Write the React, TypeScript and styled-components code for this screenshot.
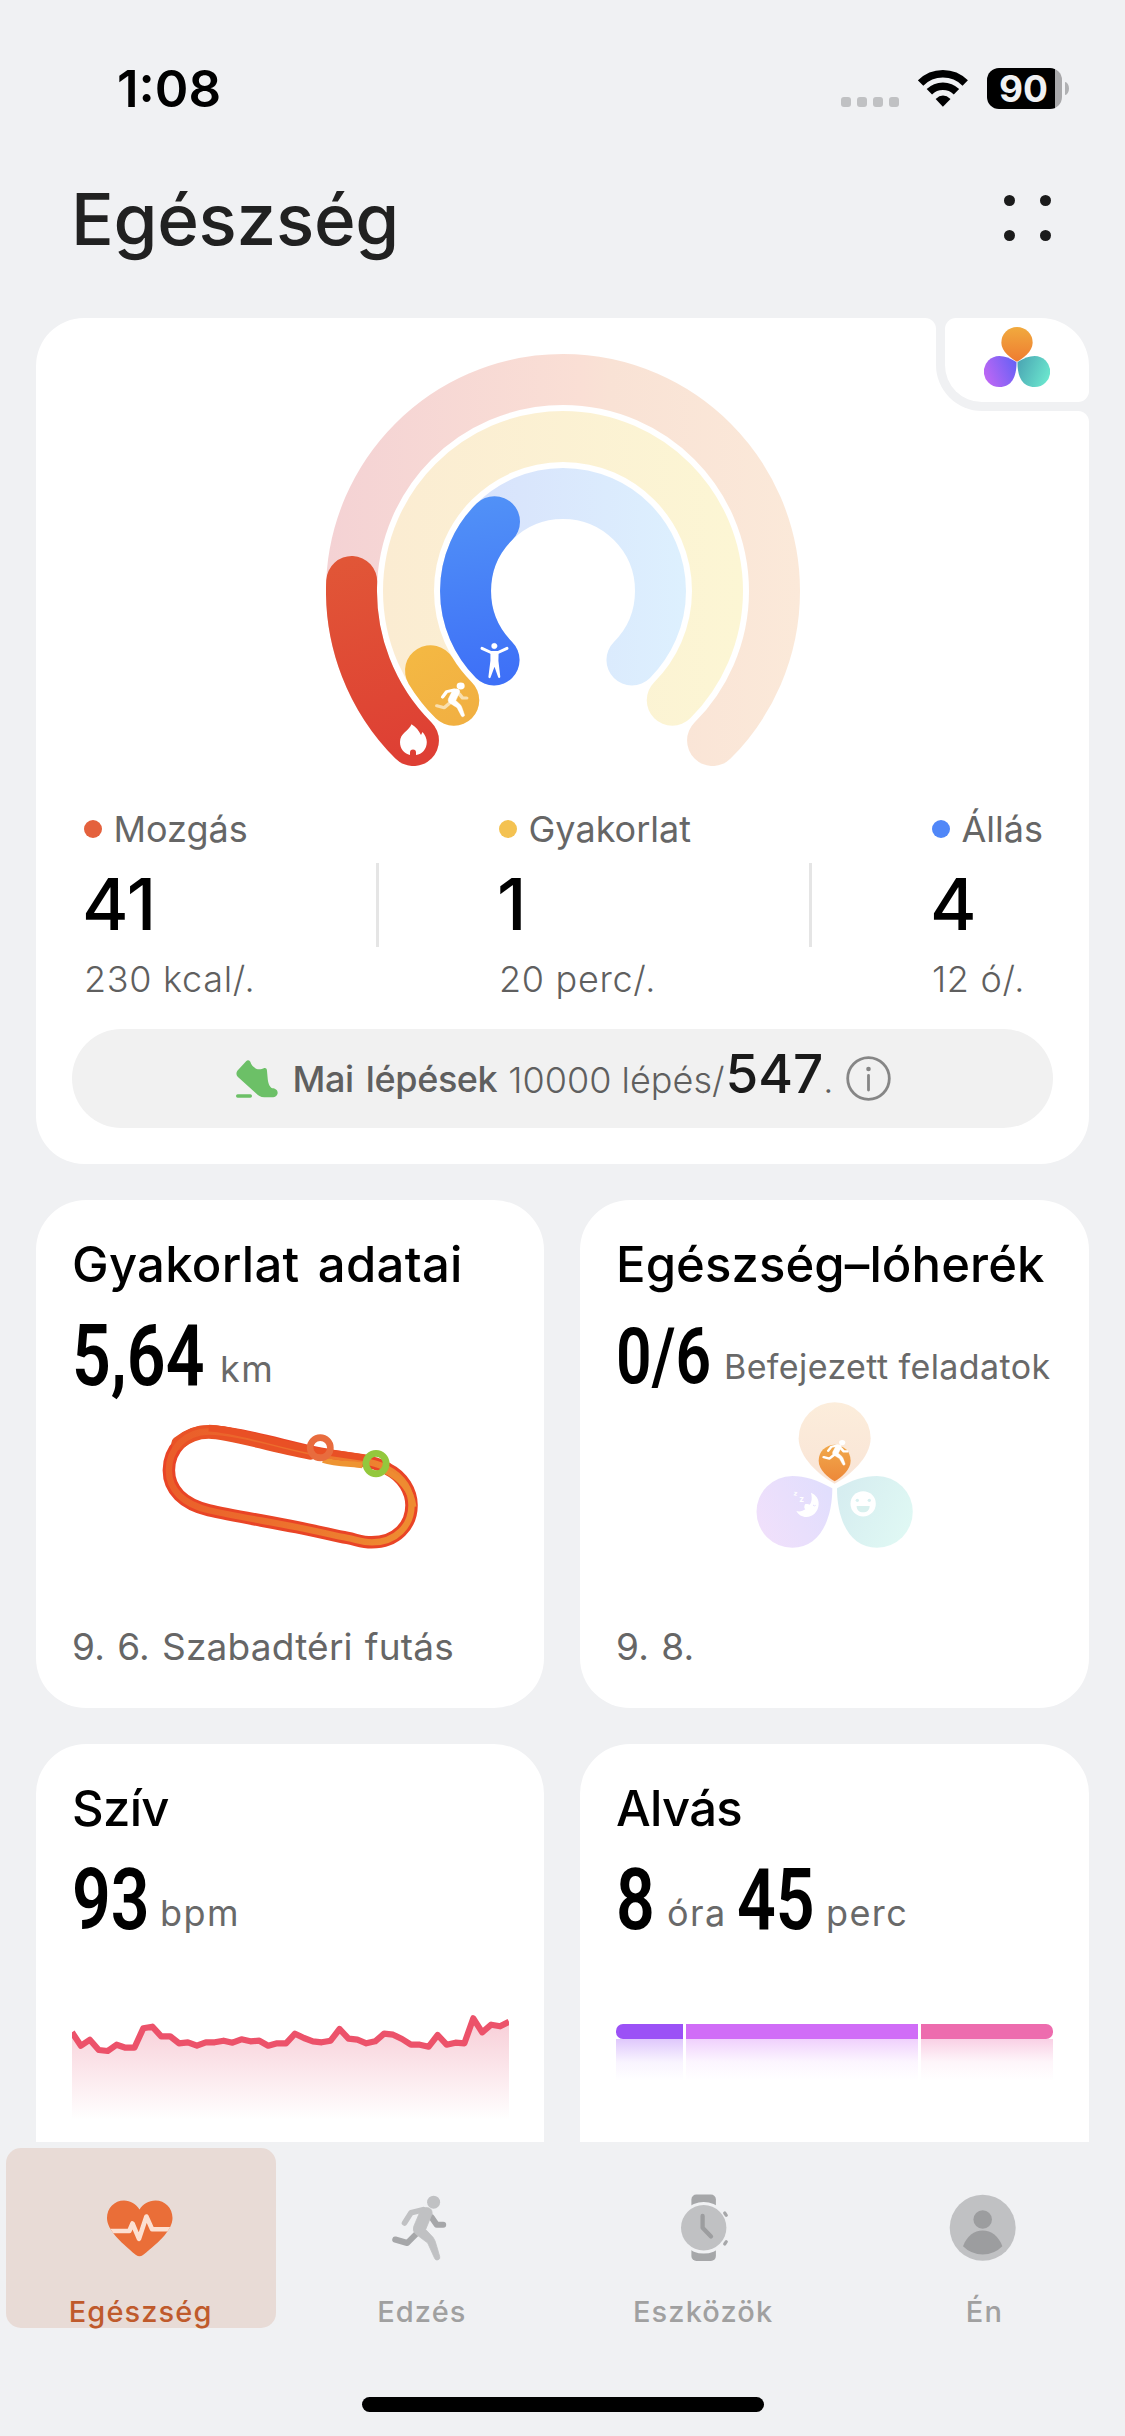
import React from "react";
import styled, { createGlobalStyle } from "styled-components";

const PAGE = "#f0f1f3";

const GlobalStyle = createGlobalStyle`
  *, *::before, *::after { box-sizing: border-box; }
  body { margin: 0; background: ${PAGE}; }
`;

const Screen = styled.div`
  width: 1125px;
  height: 2436px;
  display: flex;
  flex-direction: column;
  overflow: hidden;
  background: ${PAGE};
  color: #000;
  font-family: Inter, "Liberation Sans", sans-serif;
  white-space: nowrap;

  svg { display: block; flex: none; }
`;

/* ---------- status bar ---------- */

const StatusBar = styled.div`
  flex: none;
  height: 177px;
  padding: 0 56px 0 117px;
  display: flex;
  align-items: center;
  justify-content: space-between;
`;

const Clock = styled.div`
  font-size: 51px;
  line-height: 60px;
  font-weight: 600;
`;

const StatusIcons = styled.div`
  display: flex;
  align-items: center;
  gap: 19px;
`;

const SignalDots = styled.div`
  display: flex;
  gap: 6px;
  margin-top: 27px;
`;

const SignalDot = styled.i`
  width: 10px;
  height: 10px;
  border-radius: 3px;
  background: #c0c1c3;
`;

const BatteryWrap = styled.div`
  display: flex;
  align-items: center;
  gap: 3px;
`;

const Battery = styled.div`
  width: 75px;
  height: 41px;
  padding-right: 2px;
  border-radius: 12px;
  background: linear-gradient(90deg, #000 68px, #a8a8aa 68px);
  color: ${PAGE};
  font-size: 37px;
  line-height: 41px;
  font-weight: 700;
  text-align: center;
`;

const BatteryNub = styled.i`
  width: 4px;
  height: 13px;
  border-radius: 0 4px 4px 0 / 0 6.5px 6.5px 0;
  background: #b0b1b3;
`;

/* ---------- page header ---------- */

const Header = styled.header`
  flex: none;
  height: 85px;
  margin-bottom: 56px;
  padding: 0 74px 0 71px;
  display: flex;
  align-items: center;
  justify-content: space-between;
`;

const PageTitle = styled.h1`
  margin: 0;
  font-size: 71px;
  line-height: 85px;
  font-weight: 450;
  letter-spacing: -0.3px;
  color: #212121;
`;

const MoreDots = styled.div`
  display: grid;
  grid-template-columns: 11px 11px;
  gap: 23.5px 25px;
  margin-top: -3px;
`;

const MoreDot = styled.i`
  width: 11px;
  height: 11px;
  border-radius: 50%;
  background: #1b1b1b;
`;

const Scroll = styled.main`
  flex: 1;
  min-height: 0;
  overflow: hidden;
  padding: 0 36px;
`;

/* ---------- activity card ---------- */

const ActivityCard = styled.section`
  position: relative;
  height: 846px;
  padding-top: 36px;
  border-radius: 48px;
  background: #fff;
  display: flex;
  flex-direction: column;
  align-items: center;
`;

const CloverCorner = styled.div`
  position: absolute;
  top: 0;
  right: 0;
  width: 153px;
  height: 93px;
  padding: 0 0 9px 9px;
  border-bottom-left-radius: 46px;
  background: ${PAGE};

  &::before, &::after {
    content: "";
    position: absolute;
    width: 11px;
    height: 11px;
    background: radial-gradient(circle at 0 100%, #fff 10.5px, ${PAGE} 11.5px);
  }
  &::before { top: 0; left: -11px; }
  &::after { top: 93px; right: 0; }
`;

const CloverTile = styled.div`
  width: 144px;
  height: 84px;
  padding: 9px 0 0 39px;
  border-radius: 11px 48px 11px 37px;
  background: #fff;
`;

const Stats = styled.div`
  width: 100%;
  margin-top: 41px;
  padding-left: 48px;
  display: flex;
`;

const Stat = styled.div<{ $first?: boolean }>`
  width: ${(p) => (p.$first ? "292px" : "430px")};
  padding-left: ${(p) => (p.$first ? "0" : "120px")};
  flex: none;
  display: flex;
  flex-direction: column;
  gap: 10px;

  &:last-child { width: auto; }
`;

const StatLabel = styled.div`
  display: flex;
  align-items: center;
  gap: 11.5px;
  font-size: 36px;
  line-height: 44px;
  color: #666;
`;

const StatDot = styled.i<{ $color: string }>`
  width: 18px;
  height: 18px;
  border-radius: 50%;
  background: ${(p) => p.$color};
`;

const StatNumber = styled.div`
  margin-left: -2px;
  font-size: 71px;
  line-height: 86px;
  font-weight: 500;
`;

const StatGoal = styled.div`
  font-size: 36px;
  line-height: 44px;
  font-weight: 300;
  letter-spacing: 0.7px;
  color: #5f5f5f;
`;

const Divider = styled.i`
  flex: none;
  width: 3px;
  height: 84px;
  margin-top: 56px;
  background: #e5e5e5;
`;

const StepsPill = styled.div`
  width: 981px;
  height: 99px;
  margin-top: 28px;
  padding: 0 162px 0 164px;
  border-radius: 50px;
  background: #f1f1f1;
  display: flex;
  align-items: center;
`;

const StepsLabel = styled.div`
  margin: 0 11px 0 14.5px;
  font-size: 36px;
  line-height: 44px;
  font-weight: 500;
  letter-spacing: -0.4px;
  word-spacing: 3px;
  color: #5f5f5f;
`;

const StepsCount = styled.div`
  display: flex;
  align-items: baseline;
  padding-bottom: 10px;
  font-size: 36px;
  line-height: 44px;
  font-weight: 300;
  color: #5f5f5f;
`;

const StepsNow = styled.b`
  margin-left: 1px;
  font-size: 53px;
  line-height: 60px;
  font-weight: 500;
  color: #1a1a1a;
`;

const InfoSlot = styled.div`
  margin-left: auto;
`;

/* ---------- tiles ---------- */

const TileGrid = styled.div`
  margin-top: 36px;
  display: grid;
  grid-template-columns: 508px 509px;
  gap: 36px;
`;

const Tile = styled.section`
  height: 508px;
  padding: 35px 36px 39px;
  border-radius: 50px;
  background: #fff;
  display: flex;
  flex-direction: column;
`;

const TileTitle = styled.h2<{ $spacing?: number }>`
  margin: 0 0 21px;
  font-size: 49px;
  line-height: 60px;
  font-weight: 500;
  letter-spacing: ${(p) => p.$spacing ?? 0}px;
  word-spacing: 5px;
`;

const ValueRow = styled.div`
  height: 80px;
  display: flex;
  align-items: flex-end;
`;

const FigureBox = styled.div<{ $width: number }>`
  flex: none;
  width: ${(p) => p.$width}px;
  height: 80px;
`;

const FigureText = styled.span<{ $size?: number }>`
  display: inline-block;
  transform: scaleX(0.8);
  transform-origin: 0 0;
  font: 600 ${(p) => p.$size ?? 85}px/81px Roboto, sans-serif;
`;

const Unit = styled.span<{ $width?: number; $small?: boolean }>`
  flex: none;
  width: ${(p) => (p.$width ? `${p.$width}px` : "auto")};
  margin-bottom: ${(p) => (p.$small ? 7 : 5)}px;
  font-size: ${(p) => (p.$small ? 34 : 36)}px;
  line-height: 44px;
  letter-spacing: ${(p) => (p.$small ? 0.4 : 1.4)}px;
  color: #696969;
`;

const TileFooter = styled.div`
  margin-top: auto;
  font-size: 37px;
  line-height: 44px;
  letter-spacing: 0.2px;
  word-spacing: 1.5px;
  color: #666;
`;

const TrackSlot = styled.div`
  margin: 23px 0 0 86px;
`;

const PetalSlot = styled.div`
  margin: 4px 0 0 137px;
`;

const HeartSlot = styled.div`
  margin-top: 74px;
`;

const SleepBar = styled.div`
  margin-top: 84px;
  display: flex;
  gap: 3px;
`;

const SleepStage = styled.div<{ $color: string; $width: number }>`
  flex: ${(p) => p.$width} 0 0;

  &::before {
    content: "";
    display: block;
    height: 15px;
    background: ${(p) => p.$color};
  }
  &::after {
    content: "";
    display: block;
    height: 42px;
    opacity: 0.32;
    background: linear-gradient(${(p) => p.$color}, ${(p) => p.$color}33 55%, ${(p) => p.$color}00);
  }
  &:first-child::before { border-radius: 7px 0 0 7px; }
  &:last-child::before { border-radius: 0 7px 7px 0; }
`;

/* ---------- bottom navigation ---------- */

const Nav = styled.nav`
  flex: none;
  height: 294px;
  padding-top: 6px;
  display: flex;
  flex-direction: column;
  align-items: center;
`;

const Tabs = styled.div`
  width: 100%;
  display: grid;
  grid-template-columns: repeat(4, 1fr);
  justify-items: center;
`;

const Tab = styled.div<{ $active?: boolean }>`
  width: 270px;
  height: 180px;
  padding-top: 43.5px;
  border-radius: 15px;
  background: ${(p) => (p.$active ? "#e8dbd6" : "transparent")};
  color: ${(p) => (p.$active ? "#bf5a2c" : "#a0a0a0")};
  display: flex;
  flex-direction: column;
  align-items: center;
  gap: 30px;
  font-size: 29px;
  line-height: 36px;
  font-weight: 450;
  letter-spacing: 1.1px;
`;

const HomeIndicator = styled.i`
  width: 402px;
  height: 15px;
  margin-top: 69px;
  border-radius: 8px;
  background: #000;
`;

/* ---------- drawings ---------- */

const Wifi = () => (
  <svg width="50.5" height="37" viewBox="277 60 152 112">
    <g fill="none" stroke="#000">
      <path d="M284.5 99.5A95.5 95.5 0 0 1 419.5 99.5" strokeWidth="23" />
      <path d="M311 126A58 58 0 0 1 393 126" strokeWidth="23" />
    </g>
    <path d="M330 148Q352 127 375 148L352 171Z" />
  </svg>
);

const RunnerShape = ({ front, back }: { front: string; back: string }) => (
  <g fill="none" strokeLinecap="round" strokeLinejoin="round">
    <g stroke={back} strokeWidth="6">
      <path d="M39.500 22L44.500 29.300H51" />
      <path d="M25 37.500L15 47.500L3 44" />
    </g>
    <circle cx="41.400" cy="6.700" r="6.500" fill={front} />
    <path d="M12.300 27.500L18.800 17.300L31 14.200" stroke={front} strokeWidth="5.600" />
    <path d="M29 13.500L34 12Q40 12 40 18L33.500 34L41 42Q43 45 44 49L47.500 61A2.700 2.700 0 0 1 42.500 63L35.500 47.500L23.500 38.500Q20 35.500 21.500 31L27 18Z" fill={front} stroke={front} strokeWidth="0.800" />
  </g>
);

const arc = (r: number, x: number, y: number) => {
  const d = r * Math.SQRT1_2;
  return `M${563 - d} ${591 + d}A${r} ${r} 0 0 1 ${x} ${y}`;
};

const track = (r: number) => {
  const d = r * Math.SQRT1_2;
  return `M${563 - d} ${591 + d}A${r} ${r} 0 1 1 ${563 + d} ${591 + d}`;
};

const ActivityRings = () => (
  <svg width="474" height="412" viewBox="326 354 474 412">
    <defs>
      <linearGradient id="moveTrack" gradientUnits="userSpaceOnUse" x1="326" x2="800" y1="0" y2="0">
        <stop offset="0" stopColor="#f4d2d4" />
        <stop offset="0.540" stopColor="#fadfd5" />
        <stop offset="0.600" stopColor="#f9e2d5" />
        <stop offset="1" stopColor="#fbe9d9" />
      </linearGradient>
      <linearGradient id="workTrack" gradientUnits="userSpaceOnUse" x1="383" x2="743" y1="0" y2="0">
        <stop offset="0" stopColor="#fbecd2" />
        <stop offset="1" stopColor="#fcf6d4" />
      </linearGradient>
      <linearGradient id="standTrack" gradientUnits="userSpaceOnUse" x1="440" x2="686" y1="0" y2="0">
        <stop offset="0" stopColor="#d7e0fb" />
        <stop offset="1" stopColor="#ddf0fe" />
      </linearGradient>
      <linearGradient id="move" gradientUnits="userSpaceOnUse" x1="340" x2="400" y1="560" y2="760">
        <stop offset="0" stopColor="#e15637" />
        <stop offset="0.700" stopColor="#df4634" />
        <stop offset="1" stopColor="#de3f34" />
      </linearGradient>
      <linearGradient id="work" gradientUnits="userSpaceOnUse" x1="420" x2="460" y1="650" y2="720">
        <stop offset="0" stopColor="#f4b843" />
        <stop offset="1" stopColor="#f1b042" />
      </linearGradient>
      <linearGradient id="stand" gradientUnits="userSpaceOnUse" x1="470" x2="500" y1="500" y2="680">
        <stop offset="0" stopColor="#5191f7" />
        <stop offset="1" stopColor="#3e70f7" />
      </linearGradient>
    </defs>
    <g fill="none" strokeWidth="51" strokeLinecap="round">
      <path d={track(211.5)} stroke="url(#moveTrack)" />
      <path d={track(154.5)} stroke="url(#workTrack)" />
      <path d={track(97.5)} stroke="url(#standTrack)" />
      <path d={arc(211.5, 351.7, 581.5)} stroke="url(#move)" />
      <path d={arc(154.5, 430.5, 670.7)} stroke="url(#work)" />
      <path d={arc(97.5, 494.5, 521.7)} stroke="url(#stand)" />
    </g>
    <path
      fill="#fff"
      d="M411.500 724.300C416 727 419 731 421 735L422.500 732C425 734.500 426.800 739 426.800 742C426.800 749 422 754.500 416 755V752.500A3 3 0 0 0 410 752.500V755C404 753.500 400 749 400 742C400 733 409 731 411.500 724.300Z"
    />
    <g transform="translate(435 682.500) scale(0.620 0.530)">
      <RunnerShape front="#fff" back="#f9dfae" />
    </g>
    <g stroke="#fff" strokeWidth="3" strokeLinecap="round" strokeLinejoin="round">
      <circle cx="494.300" cy="646" r="2.700" fill="#fff" strokeWidth="0.500" />
      <path d="M482 648.300L491 652.500H498L507 648.300" fill="none" />
      <path d="M491.500 653H497.500L497.300 661L499.200 677L494.500 663.500L489.500 677L491.500 661Z" fill="#fff" strokeWidth="2.200" />
    </g>
  </svg>
);

const CloverLogo = () => (
  <svg width="66" height="60" viewBox="477 831 198 180">
    <defs>
      <linearGradient id="cl1" x1="0" x2="0" y1="0" y2="1">
        <stop offset="0" stopColor="#f1aa3e" />
        <stop offset="1" stopColor="#ee7c31" />
      </linearGradient>
      <linearGradient id="cl2" x1="0" x2="1" y1="0.700" y2="0.300">
        <stop offset="0" stopColor="#c067f4" />
        <stop offset="1" stopColor="#6961f5" />
      </linearGradient>
      <linearGradient id="cl3" x1="0" x2="1" y1="0.300" y2="0.700">
        <stop offset="0" stopColor="#4ca8b4" />
        <stop offset="1" stopColor="#6ce8cf" />
      </linearGradient>
    </defs>
    <path fill="url(#cl1)" d="M576 935C560 926 529 905 529 878A47 47 0 0 1 623 878C623 905 592 926 576 935Z" />
    <path fill="url(#cl2)" d="M574.500 936C555 924 540 918 523 918A46.500 46.500 0 0 0 523 1011C560 1011 575 980 574.500 936Z" />
    <path fill="url(#cl3)" d="M577.500 936C597 924 612 918 629 918A46.500 46.500 0 0 1 629 1011C592 1011 577 980 577.500 936Z" />
  </svg>
);

const Shoe = () => (
  <svg width="42" height="38" viewBox="33 90 126 114" fill="#6cc067">
    <path d="M64 93Q70 88 76 95C78 104 86 112 95 117C103 119 112 117 118 114Q126 113 126 123L128 145C129 158 133 172 142 175C150 175 158 180 158 188C158 196 150 202 142 202H118C106 202 100 196 92 189L38 140Q31 133 37 122Z" />
    <rect x="33" y="193" width="48" height="10" rx="5" />
  </svg>
);

const Info = () => (
  <svg width="45" height="45" viewBox="0 0 45 45">
    <circle cx="22.500" cy="22.500" r="20.800" fill="none" stroke="#868686" strokeWidth="2.800" />
    <circle cx="22.500" cy="13" r="2.300" fill="#868686" />
    <path d="M22.500 19.500V34" stroke="#868686" strokeWidth="2.800" strokeLinecap="round" />
  </svg>
);

const LOOP =
  "M530 717C460 717 412 770 412 832C412 890 455 932 530 950C600 966 710 984 790 1000C850 1012 900 1024 940 1032C970 1038 985 1045 1012 1045C1085 1045 1130 995 1130 935C1130 895 1105 850 1060 828C1030 808 980 802 900 790C780 770 620 717 530 717Z";

const RunTrack = () => (
  <svg width="263.700" height="135.200" viewBox="380 680 780 400">
    <defs>
      <linearGradient id="pace" gradientUnits="userSpaceOnUse" x1="400" x2="1140" y1="760" y2="940">
        <stop offset="0" stopColor="#ea5c2a" />
        <stop offset="0.500" stopColor="#ec702d" />
        <stop offset="1" stopColor="#ee8c31" />
      </linearGradient>
    </defs>
    <g fill="none" strokeLinejoin="round">
      <path d={LOOP} stroke="#e94426" strokeWidth="37" />
      <path d="M440 752Q480 718 530 718C590 718 700 755 830 780" stroke="#e95226" strokeWidth="41" strokeLinecap="round" />
      <path d={LOOP} stroke="url(#pace)" strokeWidth="19" />
      <path d="M530 707C620 712 720 750 830 771L1000 796" stroke="#e95025" strokeWidth="20" />
      <path d="M868 801C900 811 940 812 985 817" stroke="#ee9432" strokeWidth="17" />
      <path d="M1050 832C1100 856 1130 895 1136 940" stroke="#ee8b31" strokeWidth="18" />
      <circle cx="860" cy="765" r="30" stroke="#e86c3e" strokeWidth="19.500" />
      <circle cx="1025" cy="812" r="30" stroke="#93c83d" strokeWidth="20" />
    </g>
  </svg>
);

const TaskPetals = () => (
  <svg width="163.300" height="150" viewBox="100 60 490 450">
    <defs>
      <linearGradient id="p1" x1="0" x2="0" y1="0" y2="1">
        <stop offset="0" stopColor="#fceddb" />
        <stop offset="1" stopColor="#f9e4d6" />
      </linearGradient>
      <linearGradient id="p2" x1="0" x2="1" y1="0.800" y2="0.300">
        <stop offset="0" stopColor="#f1e0fb" />
        <stop offset="1" stopColor="#e1defd" />
      </linearGradient>
      <linearGradient id="p3" x1="0" x2="1" y1="0.300" y2="0.800">
        <stop offset="0" stopColor="#d6edf0" />
        <stop offset="1" stopColor="#e0f9f4" />
      </linearGradient>
      <linearGradient id="p4" x1="0" x2="0" y1="0" y2="1">
        <stop offset="0" stopColor="#f1a94b" />
        <stop offset="1" stopColor="#ed8839" />
      </linearGradient>
    </defs>
    <path fill="url(#p1)" d="M345 311C300 288 237 232 237 175A108 108 0 0 1 453 175C453 232 390 288 345 311Z" />
    <path fill="url(#p2)" d="M338 325C295 300 255 288 218 288A107.500 107.500 0 0 0 218 503C300 503 338 420 338 325Z" />
    <path fill="url(#p3)" d="M352 325C395 300 435 288 472 288A107.500 107.500 0 0 1 472 503C390 503 352 420 352 325Z" />
    <path fill="url(#p4)" d="M345 304C325 292 297 270 297 242A48 48 0 0 1 393 242C393 270 365 292 345 304Z" />
    <g transform="translate(308 180) scale(1.440 1.170)">
      <RunnerShape front="#fff" back="#fff" />
    </g>
    <path
      fill="#fff"
      d="M274 338C290 345 298 358 297 373C296 396 279 411 260 411C247 411 236 404 230 393C240 396 250 393 257 388C252 384 254 378 256 373C262 371 268 374 270 374C278 364 277 350 274 338Z"
    />
    <path d="M280 375Q284 380 288 376" fill="none" stroke="#e3dffc" strokeWidth="3" />
    <g fill="#fff" fontFamily="Inter, sans-serif" fontWeight="700">
      <text x="222" y="347" fontSize="20" transform="rotate(10 228 341)">z</text>
      <text x="239" y="365" fontSize="25">z</text>
    </g>
    <circle cx="430.500" cy="371.500" r="38" fill="#fff" />
    <circle cx="413" cy="361" r="5" fill="#d8f0f0" />
    <circle cx="449" cy="361" r="5" fill="#d8f0f0" />
    <path d="M411 378H450C450 390 442 397 430 397C419 397 411 390 411 378Z" fill="#d8f0ee" />
  </svg>
);

const heartRate = [
  910, 950, 932, 963, 966, 947, 956, 956, 898, 893, 922, 922, 943, 940, 950, 940, 940, 935, 941, 931, 937, 935, 950,
  943, 943, 914, 927, 937, 940, 935, 900, 929, 932, 943, 937, 914, 917, 930, 947, 947, 953, 918, 947, 941, 943, 868,
  910, 887, 892, 878,
];

const HeartChart = () => {
  const line = heartRate
    .map((y, i) => `${((i * 437) / (heartRate.length - 1)).toFixed(1)},${((y - 855) / 3).toFixed(1)}`)
    .join(" ");
  return (
    <svg width="437" height="107" viewBox="0 0 437 107">
      <defs>
        <linearGradient id="hr" gradientUnits="userSpaceOnUse" x1="0" x2="0" y1="8" y2="106">
          <stop offset="0" stopColor="#f8cfd8" />
          <stop offset="1" stopColor="#ffffff" />
        </linearGradient>
      </defs>
      <polygon points={`0,107 ${line} 437,107`} fill="url(#hr)" />
      <polyline points={line} fill="none" stroke="#ec526a" strokeWidth="6.200" strokeLinejoin="round" />
    </svg>
  );
};

const HEART =
  "M34.500 17.500C38 12 43.500 8.500 50.500 8.500C60 8.500 67.500 16 67.500 26C67.500 37 56 49 38 63Q34.500 65.500 31 63C14 49 2 37 2 26C2 16 9.500 8.500 19 8.500C25.500 8.500 31 12 34.500 17.500Z";

const HeartIcon = () => (
  <svg width="72" height="72" viewBox="0 0 72 72">
    <clipPath id="heartClip">
      <path d={HEART} />
    </clipPath>
    <path d={HEART} fill="#ea6e38" />
    <path
      d="M0 39H24.300L27.500 31.500L34 46.800L41.400 24.500L47.100 37.200H72"
      clipPath="url(#heartClip)"
      fill="none"
      stroke="#fce0d2"
      strokeWidth="4.600"
      strokeLinejoin="round"
    />
  </svg>
);

const RunnerIcon = () => (
  <svg width="72" height="72" viewBox="0 0 72 72">
    <g transform="translate(6.200 3.500)">
      <RunnerShape front="#c0c1c3" back="#a6a7a9" />
    </g>
  </svg>
);

const WatchIcon = () => (
  <svg width="72" height="72" viewBox="0 0 72 72">
    <rect x="24.400" y="2.500" width="24.500" height="66.500" rx="5" fill="#a6a7a9" />
    <circle cx="36.700" cy="35.800" r="25.800" fill={PAGE} />
    <circle cx="36.700" cy="35.800" r="22.700" fill="#c0c1c3" />
    <g fill="none" strokeLinecap="round" strokeLinejoin="round">
      <path d="M35.600 24V35.800L44 44.500" stroke="#9c9d9f" strokeWidth="4.300" />
      <path d="M57.700 21L59.300 23.300M59.300 49.700L57.700 52" stroke="#a6a7a9" strokeWidth="3.200" />
    </g>
  </svg>
);

const ProfileIcon = () => (
  <svg width="72" height="72" viewBox="0 0 72 72">
    <circle cx="34.700" cy="35.800" r="33" fill="#c0c1c3" />
    <circle cx="34.700" cy="27.500" r="9.300" fill="#9c9d9f" />
    <path d="M15 54.200C19 44 26 38.500 34.700 38.500S50.400 44 54.400 54.200Q46 62.500 34.700 62.500T15 54.200Z" fill="#9c9d9f" />
  </svg>
);

/* ---------- screen ---------- */

const Figure = ({ text, width, size }: { text: string; width: number; size?: number }) => (
  <FigureBox $width={width}>
    <FigureText $size={size}>{text}</FigureText>
  </FigureBox>
);

export default function App() {
  return (
    <Screen>
      <GlobalStyle />
      <StatusBar>
        <Clock>1:08</Clock>
        <StatusIcons>
          <SignalDots>
            <SignalDot />
            <SignalDot />
            <SignalDot />
            <SignalDot />
          </SignalDots>
          <Wifi />
          <BatteryWrap>
            <Battery>90</Battery>
            <BatteryNub />
          </BatteryWrap>
        </StatusIcons>
      </StatusBar>

      <Header>
        <PageTitle>Egészség</PageTitle>
        <MoreDots>
          <MoreDot />
          <MoreDot />
          <MoreDot />
          <MoreDot />
        </MoreDots>
      </Header>

      <Scroll>
        <ActivityCard>
          <CloverCorner>
            <CloverTile>
              <CloverLogo />
            </CloverTile>
          </CloverCorner>
          <ActivityRings />
          <Stats>
            <Stat $first>
              <StatLabel>
                <StatDot $color="#e4613d" />
                Mozgás
              </StatLabel>
              <StatNumber>41</StatNumber>
              <StatGoal>230 kcal/.</StatGoal>
            </Stat>
            <Divider />
            <Stat>
              <StatLabel>
                <StatDot $color="#f4c251" />
                Gyakorlat
              </StatLabel>
              <StatNumber>1</StatNumber>
              <StatGoal>20 perc/.</StatGoal>
            </Stat>
            <Divider />
            <Stat>
              <StatLabel>
                <StatDot $color="#5087f8" />
                Állás
              </StatLabel>
              <StatNumber>4</StatNumber>
              <StatGoal>12 ó/.</StatGoal>
            </Stat>
          </Stats>
          <StepsPill>
            <Shoe />
            <StepsLabel>Mai lépések</StepsLabel>
            <StepsCount>
              10000 lépés/<StepsNow>547</StepsNow>.
            </StepsCount>
            <InfoSlot>
              <Info />
            </InfoSlot>
          </StepsPill>
        </ActivityCard>

        <TileGrid>
          <Tile>
            <TileTitle $spacing={0.3}>Gyakorlat adatai</TileTitle>
            <ValueRow>
              <Figure text="5,64" width={148} />
              <Unit>km</Unit>
            </ValueRow>
            <TrackSlot>
              <RunTrack />
            </TrackSlot>
            <TileFooter>9. 6. Szabadtéri futás</TileFooter>
          </Tile>

          <Tile>
            <TileTitle $spacing={0.1}>Egészség–lóherék</TileTitle>
            <ValueRow>
              <Figure text="0/6" width={108} size={78} />
              <Unit $small>Befejezett feladatok</Unit>
            </ValueRow>
            <PetalSlot>
              <TaskPetals />
            </PetalSlot>
            <TileFooter>9. 8.</TileFooter>
          </Tile>

          <Tile>
            <TileTitle $spacing={-0.7}>Szív</TileTitle>
            <ValueRow>
              <Figure text="93" width={88} />
              <Unit>bpm</Unit>
            </ValueRow>
            <HeartSlot>
              <HeartChart />
            </HeartSlot>
          </Tile>

          <Tile>
            <TileTitle $spacing={-0.7}>Alvás</TileTitle>
            <ValueRow>
              <Figure text="8" width={51} />
              <Unit $width={70}>óra</Unit>
              <Figure text="45" width={89} />
              <Unit>perc</Unit>
            </ValueRow>
            <SleepBar>
              <SleepStage $color="#9b51f6" $width={67} />
              <SleepStage $color="#d06df7" $width={232} />
              <SleepStage $color="#ed6cae" $width={132} />
            </SleepBar>
          </Tile>
        </TileGrid>
      </Scroll>

      <Nav>
        <Tabs>
          <Tab $active>
            <HeartIcon />
            Egészség
          </Tab>
          <Tab>
            <RunnerIcon />
            Edzés
          </Tab>
          <Tab>
            <WatchIcon />
            Eszközök
          </Tab>
          <Tab>
            <ProfileIcon />
            Én
          </Tab>
        </Tabs>
        <HomeIndicator />
      </Nav>
    </Screen>
  );
}
